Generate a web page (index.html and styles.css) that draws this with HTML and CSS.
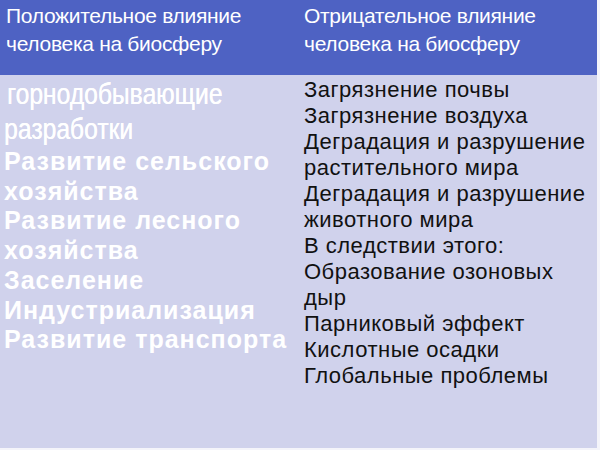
FILE: index.html
```html
<!DOCTYPE html>
<html lang="ru">
<head>
<meta charset="utf-8">
<link rel="stylesheet" href="styles.css">
</head>
<body>
<div class="table">
  <div class="head">
    <div class="hcell">Положительное влияние человека на биосферу</div>
    <div class="hcell right">Отрицательное влияние человека на биосферу</div>
  </div>
  <div class="body">
    <div class="pos">
      <div class="plain first"><span class="squeeze">горнодобывающие</span></div>
      <div class="plain second"><span class="squeeze">разработки</span></div>
      <div class="bold top">Развитие сельского хозяйства</div>
      <div class="bold">Развитие лесного хозяйства</div>
      <div class="bold">Заселение</div>
      <div class="bold">Индустриализация</div>
      <div class="bold">Развитие транспорта</div>
    </div>
    <div class="neg">
      <div>Загрязнение почвы</div>
      <div>Загрязнение воздуха</div>
      <div>Деградация и разрушение растительного мира</div>
      <div>Деградация и разрушение животного мира</div>
      <div>В следствии этого:</div>
      <div>Образование озоновых дыр</div>
      <div>Парниковый эффект</div>
      <div>Кислотные осадки</div>
      <div>Глобальные проблемы</div>
    </div>
  </div>
</div>
</body>
</html>
```
FILE: styles.css
```css
html, body {
  margin: 0;
  padding: 0;
  background: #f4f4fa;
}
.table {
  width: 597px;
  height: 448px;
  display: flex;
  flex-direction: column;
  font-family: "Liberation Sans", Arial, sans-serif;
}
.head {
  height: 75px;
  background: #4e62c3;
  display: grid;
  grid-template-columns: 298px 1fr;
  color: #fff;
}
.hcell {
  font-size: 21px;
  line-height: 28px;
  letter-spacing: -0.3px;
  padding: 2px 0 0 6px;
  width: 250px;
}
.body {
  flex: 1;
  background: #d0d2ec;
  display: grid;
  grid-template-columns: 298px 1fr;
}
.pos {
  color: #fff;
  padding: 3px 0 0 4px;
}
.plain {
  font-size: 29px;
  line-height: 32px;
  text-shadow: 0.3px 0 0 #fff;
}
.plain.second {
  margin-top: 3px;
}
.squeeze {
  display: inline-block;
  transform: scaleX(0.85);
  transform-origin: left center;
}
.plain.first {
  padding-left: 3px;
}
.bold {
  font-weight: bold;
  font-size: 25px;
  line-height: 29.7px;
  letter-spacing: 1px;
  width: 290px;
}
.bold.top {
  margin-top: 2px;
}
.neg {
  color: #111;
  font-size: 22px;
  line-height: 26px;
  letter-spacing: 0.5px;
  padding: 2px 0 0 6px;
  width: 286px;
}
```
